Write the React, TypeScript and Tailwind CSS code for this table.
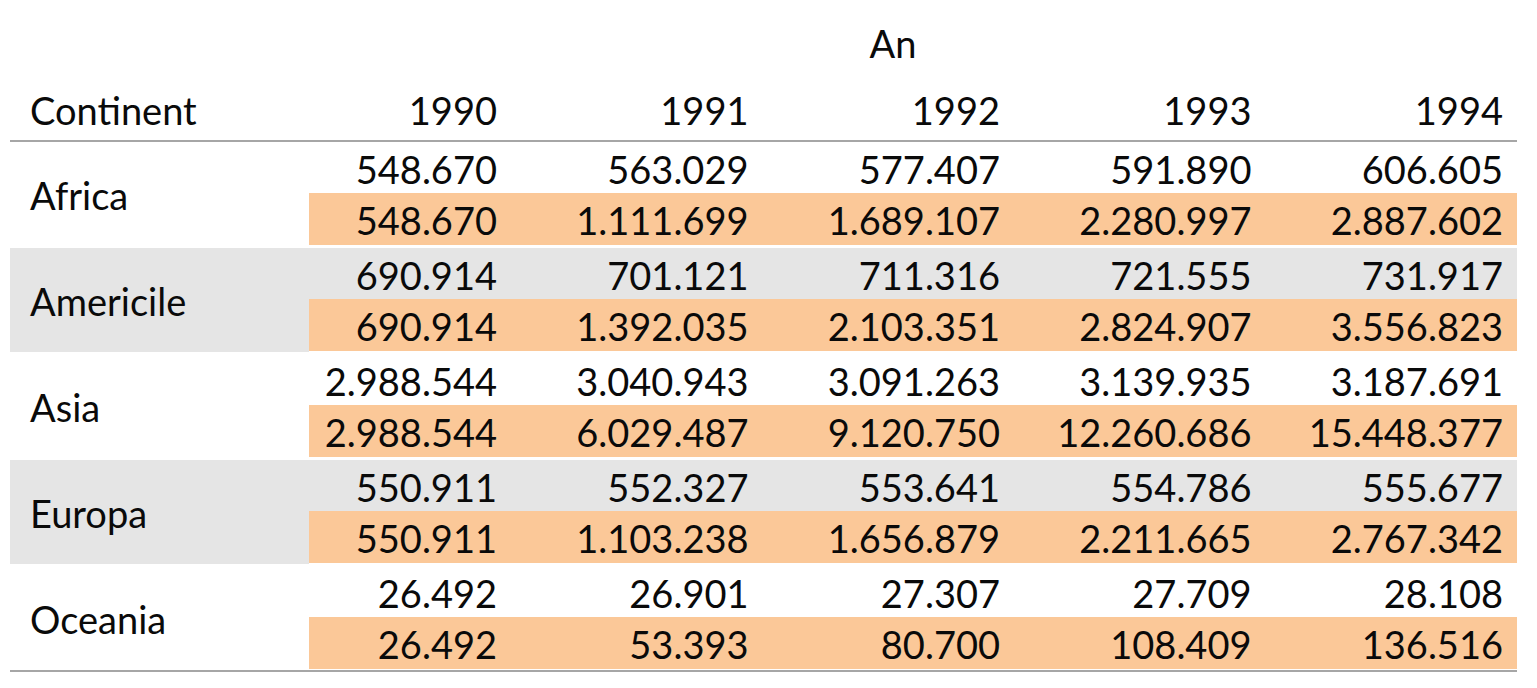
const years = ['1990', '1991', '1992', '1993', '1994'];

const data = [
  {
    name: 'Africa',
    values: ['548.670', '563.029', '577.407', '591.890', '606.605'],
    running: ['548.670', '1.111.699', '1.689.107', '2.280.997', '2.887.602'],
  },
  {
    name: 'Americile',
    values: ['690.914', '701.121', '711.316', '721.555', '731.917'],
    running: ['690.914', '1.392.035', '2.103.351', '2.824.907', '3.556.823'],
  },
  {
    name: 'Asia',
    values: ['2.988.544', '3.040.943', '3.091.263', '3.139.935', '3.187.691'],
    running: ['2.988.544', '6.029.487', '9.120.750', '12.260.686', '15.448.377'],
  },
  {
    name: 'Europa',
    values: ['550.911', '552.327', '553.641', '554.786', '555.677'],
    running: ['550.911', '1.103.238', '1.656.879', '2.211.665', '2.767.342'],
  },
  {
    name: 'Oceania',
    values: ['26.492', '26.901', '27.307', '27.709', '28.108'],
    running: ['26.492', '53.393', '80.700', '108.409', '136.516'],
  },
];

const cols = 'grid grid-cols-[299px_202px_251.5px_251.5px_251.5px_251.5px]';

export default function App() {
  return (
    <div
      className="min-h-[688px] w-[1537px] bg-white text-[#0a0a0a]"
      style={{ fontFamily: 'Lato, "Open Sans", sans-serif' }}
    >
      <div className="ml-[10px] w-[1507px] text-[38px] leading-none">
        {/* header */}
        <div className={`${cols} h-[78px] items-center pt-[8px]`}>
          <div />
          <div className="col-span-5 pr-[40px] text-center">An</div>
        </div>
        <div className={`${cols} h-[64px] items-center border-b-2 border-[#a6a6a6] pt-[2px]`}>
          <div className="pl-[20px]">Continent</div>
          {years.map((y) => (
            <div key={y} className="pr-[14px] text-right">
              {y}
            </div>
          ))}
        </div>

        {/* body */}
        {data.map((row, i) => (
          <div
            key={row.name}
            className={`${cols} grid-rows-[51px_53px] ${i % 2 === 1 ? 'bg-[#e5e5e5]' : 'bg-white'} ${
              i === data.length - 1 ? 'border-b-2 border-[#a6a6a6]' : 'border-b-2 border-white'
            }`}
          >
            <div className="row-span-2 flex items-center pl-[20px] pt-[2px]">{row.name}</div>
            {row.values.map((v, j) => (
              <div key={j} className="flex items-center justify-end pr-[14px] pt-[2px]">
                {v}
              </div>
            ))}
            {row.running.map((v, j) => (
              <div
                key={j}
                className="flex items-center justify-end border-b border-white bg-[#fbc898] pr-[14px] pt-[2px]"
              >
                {v}
              </div>
            ))}
          </div>
        ))}
      </div>
    </div>
  );
}
